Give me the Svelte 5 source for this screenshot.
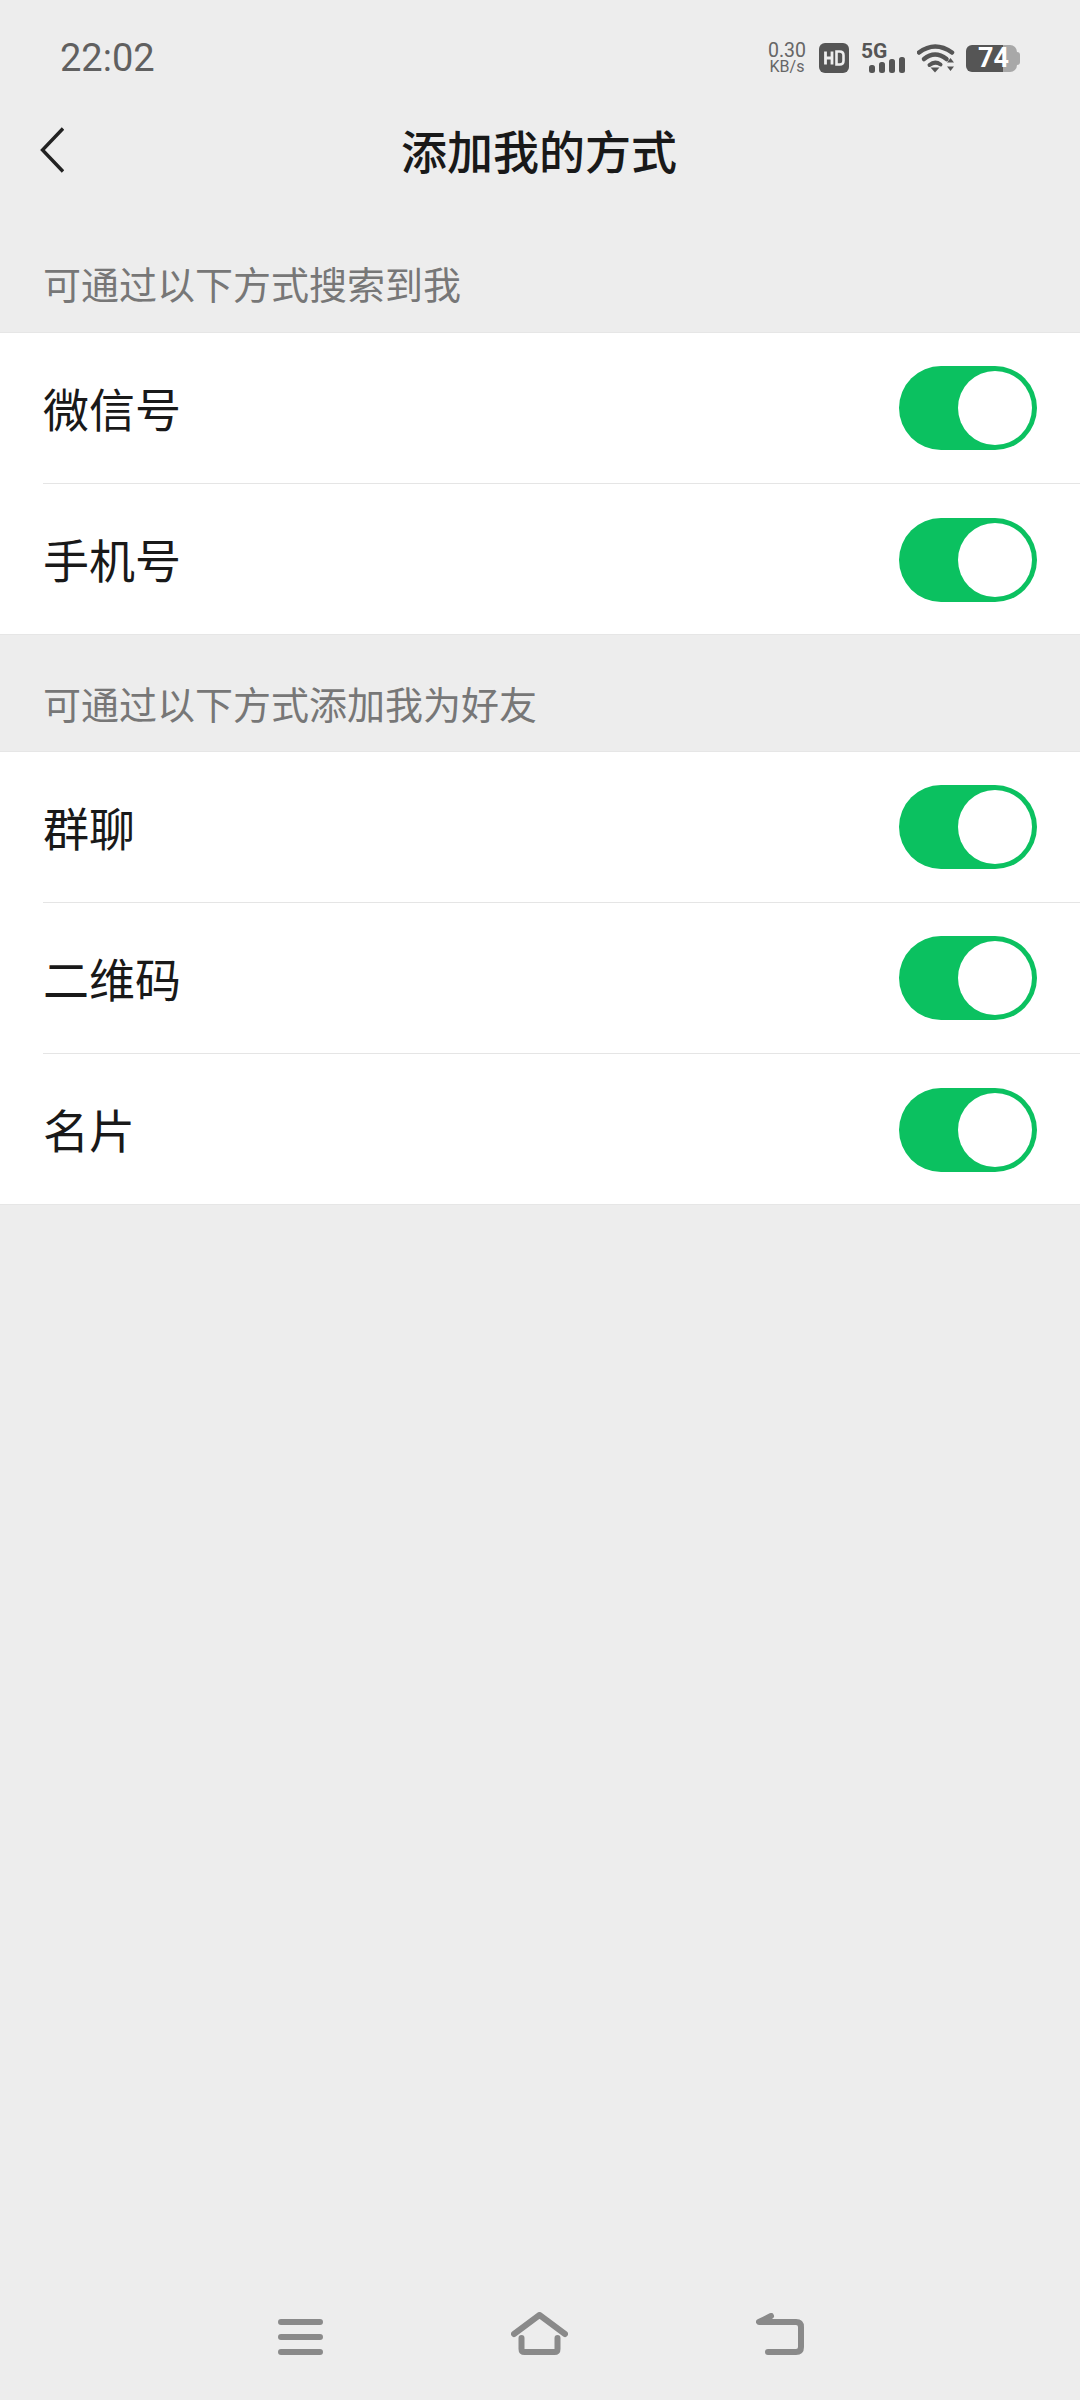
<script>
  const sections = [
    { title: "可通过以下方式搜索到我", rows: ["微信号", "手机号"] },
    { title: "可通过以下方式添加我为好友", rows: ["群聊", "二维码", "名片"] }
  ];
</script>

<div class="page">
  <div class="status">
    <span class="time">22:02</span>
    <div class="status-icons">
      <div class="speed"><span>0.30</span><span class="unit">KB/s</span></div>
      <svg class="hd" width="30" height="30" viewBox="0 0 30 30">
        <rect width="30" height="30" rx="6" fill="#555" />
        <path d="M6.500 8.500v13M13 8.500v13M6.500 15h6.500" stroke="#eee" stroke-width="2.800" fill="none" />
        <path d="M17.500 8.500v13h3.200q3.800 0 3.800-3.800v-5.400q0-3.800-3.800-3.800z" stroke="#eee" stroke-width="2.600" fill="none" />
      </svg>
      <div class="signal">
        <span class="five-g">5G</span>
        <svg width="36" height="16" viewBox="0 0 36 16">
          <rect x="0" y="8" width="6" height="8" rx="2.500" fill="#555" />
          <rect x="10" y="5" width="6" height="11" rx="2.500" fill="#555" />
          <rect x="20" y="2" width="6" height="14" rx="2.500" fill="#555" />
          <rect x="30" y="0" width="6" height="16" rx="2.500" fill="#555" />
        </svg>
      </div>
      <svg class="wifi" width="38" height="29" viewBox="0 0 38 29">
        <path d="M2 8.500Q18 -3.500 35 8.500" stroke="#555" stroke-width="4.500" fill="none" stroke-linecap="round" />
        <path d="M7 15Q18 6 29.500 15" stroke="#555" stroke-width="4.500" fill="none" stroke-linecap="round" />
        <path d="M12.500 21Q18 16.500 23.500 20.500" stroke="#555" stroke-width="4" fill="none" stroke-linecap="round" />
        <path d="M13.500 23.500h9l-4.500 5z" fill="#555" />
        <path d="M30 18.500h7l-3.500-4.500zM30 22.500h7l-3.500 4.500z" fill="#555" />
      </svg>
      <div class="battery">
        <div class="level"><span>74</span></div>
        <div class="cap"></div>
      </div>
    </div>
  </div>

  <header class="topbar">
    <svg class="back" width="24" height="46" viewBox="0 0 24 46">
      <path d="M23 1.500L2.500 23 23 44.500" stroke="#222" stroke-width="3.400" fill="none" />
    </svg>
    <h1>添加我的方式</h1>
  </header>

  {#each sections as section}
    <h2>{section.title}</h2>
    <ul>
      {#each section.rows as row}
        <li>
          <span class="label">{row}</span>
          <span class="switch"><span class="knob"></span></span>
        </li>
      {/each}
    </ul>
  {/each}

  <div class="spacer"></div>

  <nav>
    <svg width="45" height="36" viewBox="0 0 45 36">
      <path d="M3 3h39M3 18h39M3 33h39" stroke="#8a8a8a" stroke-width="6" stroke-linecap="round" />
    </svg>
    <svg width="57" height="43" viewBox="0 0 57 43">
      <path d="M3 22L28.500 3 54 22" stroke="#8a8a8a" stroke-width="6" fill="none" stroke-linecap="round" stroke-linejoin="round" />
      <path d="M10.500 26v11q0 3 3 3h30q3 0 3-3V26" stroke="#8a8a8a" stroke-width="6" fill="none" stroke-linecap="round" />
    </svg>
    <svg width="48" height="42" viewBox="0 0 48 42">
      <path d="M15 3L3 9h37q5 0 5 5v20q0 5-5 5H12" stroke="#8a8a8a" stroke-width="6" fill="none" stroke-linecap="round" stroke-linejoin="round" />
    </svg>
  </nav>
</div>

<style>
  :global(body) {
    margin: 0;
    background: #ededed;
  }
  .page {
    width: 1080px;
    height: 2400px;
    display: flex;
    flex-direction: column;
    background: #ededed;
    font-family: "Noto Sans CJK SC", "Noto Sans", sans-serif;
  }
  .status {
    height: 116px;
    padding: 0 60px;
    box-sizing: border-box;
    display: flex;
    align-items: center;
    justify-content: space-between;
  }
  .time {
    font: 38px Roboto, sans-serif;
    color: #606060;
  }
  .status-icons {
    display: flex;
    align-items: center;
    gap: 12px;
  }
  .speed {
    display: flex;
    flex-direction: column;
    align-items: center;
    width: 40px;
    font: 19.5px/17px Roboto, sans-serif;
    color: #666;
  }
  .unit {
    font-size: 16px;
    line-height: 15px;
  }
  .signal {
    width: 44px;
    height: 30px;
    display: flex;
    flex-direction: column;
    align-items: flex-end;
    position: relative;
    justify-content: flex-end;
  }
  .five-g {
    position: absolute;
    left: 0;
    top: -4px;
    font: 700 21px Roboto, sans-serif;
    color: #555;
  }
  .battery {
    display: flex;
    align-items: center;
    margin-left: -1px;
  }
  .level {
    width: 51px;
    height: 27px;
    background: linear-gradient(90deg, #555 37px, #a8a8a8 37px);
    border-radius: 6px 7px 7px 6px;
    box-sizing: border-box;
    padding-left: 12px;
    font: 700 27px/27px Roboto, sans-serif;
    color: #fff;
  }
  .cap {
    width: 3px;
    height: 13px;
    background: #a8a8a8;
    border-radius: 0 3px 3px 0;
  }
  .topbar {
    height: 76px;
    position: relative;
    display: flex;
    align-items: center;
    justify-content: center;
  }
  .back {
    position: absolute;
    left: 40px;
    top: 11px;
  }
  h1 {
    margin: -11px 2px 0 0;
    font-size: 46px;
    font-weight: 500;
    color: #191919;
  }
  h2 {
    margin: 0;
    height: 140px;
    box-sizing: border-box;
    padding: 63px 0 0 43px;
    font-size: 38px;
    line-height: 56px;
    font-weight: 400;
    color: #777;
  }
  h2:nth-of-type(2) {
    height: 116px;
    padding-top: 40px;
  }
  ul {
    margin: 0;
    padding: 0;
    list-style: none;
    background: #fff;
    border-top: 1px solid #e6e6e6;
    box-shadow: inset 0 -1px #e6e6e6;
  }
  li {
    height: 151px;
    margin-left: 43px;
    padding-right: 43px;
    display: flex;
    align-items: center;
    justify-content: space-between;
    border-bottom: 1px solid #e5e5e5;
    box-sizing: border-box;
  }
  li:last-child {
    border-bottom: 0;
  }
  .label {
    font-size: 46px;
    color: #191919;
    margin-top: -3px;
  }
  .switch {
    width: 138px;
    height: 84px;
    border-radius: 42px;
    background: #0bc160;
    display: flex;
    justify-content: flex-end;
    align-items: center;
    padding-right: 5px;
    box-sizing: border-box;
  }
  .knob {
    width: 74px;
    height: 74px;
    border-radius: 50%;
    background: #fff;
  }
  .spacer {
    flex: 1;
  }
  nav {
    padding: 0 276px 45px 278px;
    display: flex;
    align-items: flex-end;
    justify-content: space-between;
  }
</style>
